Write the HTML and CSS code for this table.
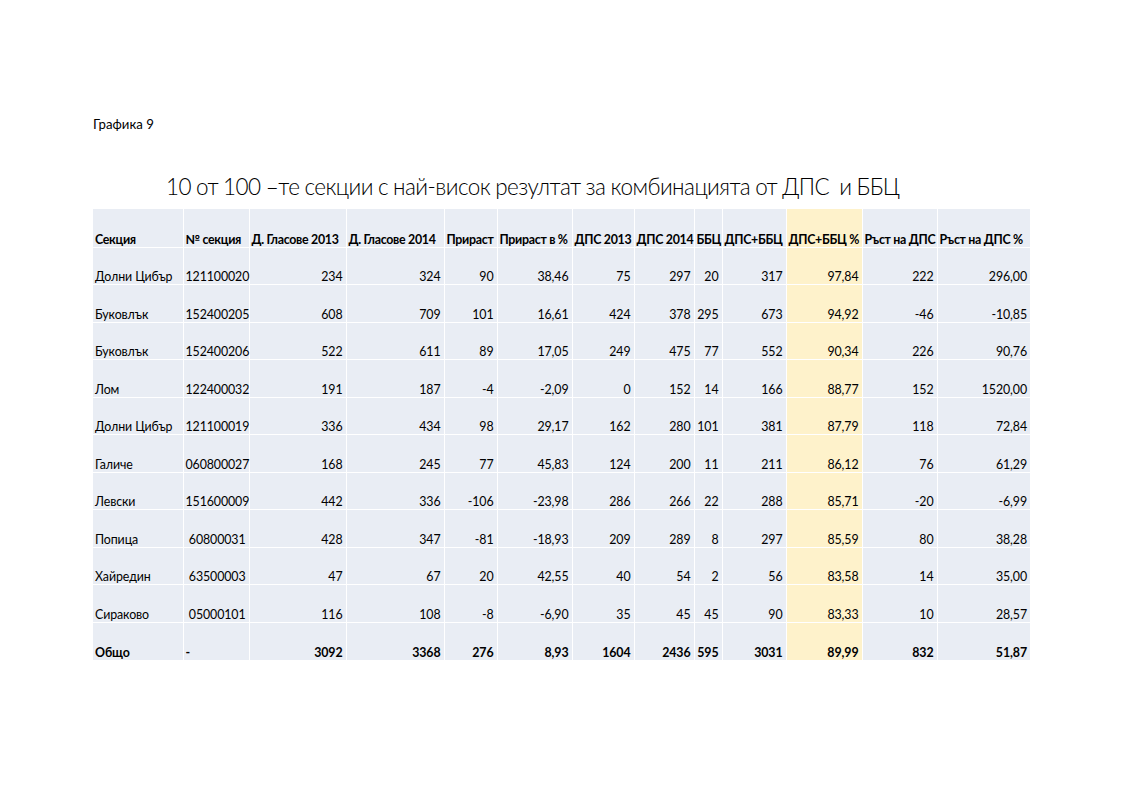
FILE: index.html
```html
<!DOCTYPE html>
<html lang="bg">
<head>
<meta charset="utf-8">
<title>Графика 9</title>
<link rel="stylesheet" href="styles.css">
</head>
<body>
<div class="page">
  <div class="caption">Графика 9</div>
  <h1 class="title">10 от 100 –те секции с най-висок резултат за комбинацията от ДПС&nbsp; и ББЦ</h1>
  <table class="grid">
    <colgroup>
      <col class="c1"><col class="c2"><col class="c3"><col class="c4"><col class="c5"><col class="c6"><col class="c7"><col class="c8"><col class="c9"><col class="c10"><col class="c11"><col class="c12"><col class="c13">
    </colgroup>
    <thead>
      <tr class="head">
        <th>Секция</th><th>№ секция</th><th>Д. Гласове 2013</th><th>Д. Гласове 2014</th><th>Прираст</th><th>Прираст в %</th><th>ДПС 2013</th><th>ДПС 2014</th><th>ББЦ</th><th>ДПС+ББЦ</th><th class="hl">ДПС+ББЦ %</th><th>Ръст на ДПС</th><th>Ръст на ДПС %</th>
      </tr>
    </thead>
    <tbody>
      <tr><td class="name">Долни Цибър</td><td>121100020</td><td>234</td><td>324</td><td>90</td><td>38,46</td><td>75</td><td>297</td><td>20</td><td>317</td><td class="hl">97,84</td><td>222</td><td>296,00</td></tr>
      <tr><td class="name">Буковлък</td><td>152400205</td><td>608</td><td>709</td><td>101</td><td>16,61</td><td>424</td><td>378</td><td>295</td><td>673</td><td class="hl">94,92</td><td>-46</td><td>-10,85</td></tr>
      <tr><td class="name">Буковлък</td><td>152400206</td><td>522</td><td>611</td><td>89</td><td>17,05</td><td>249</td><td>475</td><td>77</td><td>552</td><td class="hl">90,34</td><td>226</td><td>90,76</td></tr>
      <tr><td class="name">Лом</td><td>122400032</td><td>191</td><td>187</td><td>-4</td><td>-2,09</td><td>0</td><td>152</td><td>14</td><td>166</td><td class="hl">88,77</td><td>152</td><td>1520,00</td></tr>
      <tr><td class="name">Долни Цибър</td><td>121100019</td><td>336</td><td>434</td><td>98</td><td>29,17</td><td>162</td><td>280</td><td>101</td><td>381</td><td class="hl">87,79</td><td>118</td><td>72,84</td></tr>
      <tr><td class="name">Галиче</td><td>060800027</td><td>168</td><td>245</td><td>77</td><td>45,83</td><td>124</td><td>200</td><td>11</td><td>211</td><td class="hl">86,12</td><td>76</td><td>61,29</td></tr>
      <tr><td class="name">Левски</td><td>151600009</td><td>442</td><td>336</td><td>-106</td><td>-23,98</td><td>286</td><td>266</td><td>22</td><td>288</td><td class="hl">85,71</td><td>-20</td><td>-6,99</td></tr>
      <tr><td class="name">Попица</td><td>60800031</td><td>428</td><td>347</td><td>-81</td><td>-18,93</td><td>209</td><td>289</td><td>8</td><td>297</td><td class="hl">85,59</td><td>80</td><td>38,28</td></tr>
      <tr><td class="name">Хайредин</td><td>63500003</td><td>47</td><td>67</td><td>20</td><td>42,55</td><td>40</td><td>54</td><td>2</td><td>56</td><td class="hl">83,58</td><td>14</td><td>35,00</td></tr>
      <tr><td class="name">Сираково</td><td>05000101</td><td>116</td><td>108</td><td>-8</td><td>-6,90</td><td>35</td><td>45</td><td>45</td><td>90</td><td class="hl">83,33</td><td>10</td><td>28,57</td></tr>
      <tr class="total"><td class="name">Общо</td><td class="dash">-</td><td>3092</td><td>3368</td><td>276</td><td>8,93</td><td>1604</td><td>2436</td><td>595</td><td>3031</td><td class="hl">89,99</td><td>832</td><td>51,87</td></tr>
    </tbody>
  </table>
</div>
</body>
</html>
```

FILE: styles.css
```css
html, body {
  margin: 0;
  padding: 0;
  background: #ffffff;
}

body {
  font-family: "Lato", "Open Sans", "Liberation Sans", sans-serif;
  color: #000000;
}

.page {
  width: 1122px;
  height: 793px;
  box-sizing: border-box;
  padding: 116px 0 0 93px;
}

.caption {
  font-size: 13.2px;
  line-height: 16px;
  height: 16px;
}

.title {
  margin: 40px 0 0 73px;
  font-size: 22.5px;
  line-height: 30px;
  height: 37px;
  font-weight: 300;
  letter-spacing: -0.55px;
  word-spacing: -0.5px;
  white-space: nowrap;
}

.grid {
  table-layout: fixed;
  border-collapse: collapse;
  width: 937px;
  font-size: 12.4px;
  line-height: 14px;
  letter-spacing: -0.1px;
}

.c1 { width: 90px; }
.c2 { width: 66px; }
.c3 { width: 97px; }
.c4 { width: 98px; }
.c5 { width: 53px; }
.c6 { width: 75px; }
.c7 { width: 62px; }
.c8 { width: 60px; }
.c9 { width: 28px; }
.c10 { width: 64px; }
.c11 { width: 76px; }
.c12 { width: 75px; }
.c13 { width: 93px; }

.grid th,
.grid td {
  background: #e9edf4;
  border-right: 1px solid #ffffff;
  border-bottom: 1px solid #ffffff;
  vertical-align: bottom;
  white-space: nowrap;
  overflow: visible;
  padding: 0 3px 0 2px;
}

.grid th {
  text-align: left;
  font-weight: 700;
  height: 38px;
  box-sizing: border-box;
  padding-left: 2px;
  padding-right: 0;
  letter-spacing: -0.3px;
}

.grid td {
  text-align: right;
  height: 37.5px;
  box-sizing: border-box;
}

.grid td.name,
.grid td.dash {
  text-align: left;
}

.grid .hl {
  background: #fef2cb;
}

.total td {
  font-weight: 700;
  height: 38px;
  border-bottom: none;
}

.grid th:last-child,
.grid td:last-child {
  border-right: none;
}
```
